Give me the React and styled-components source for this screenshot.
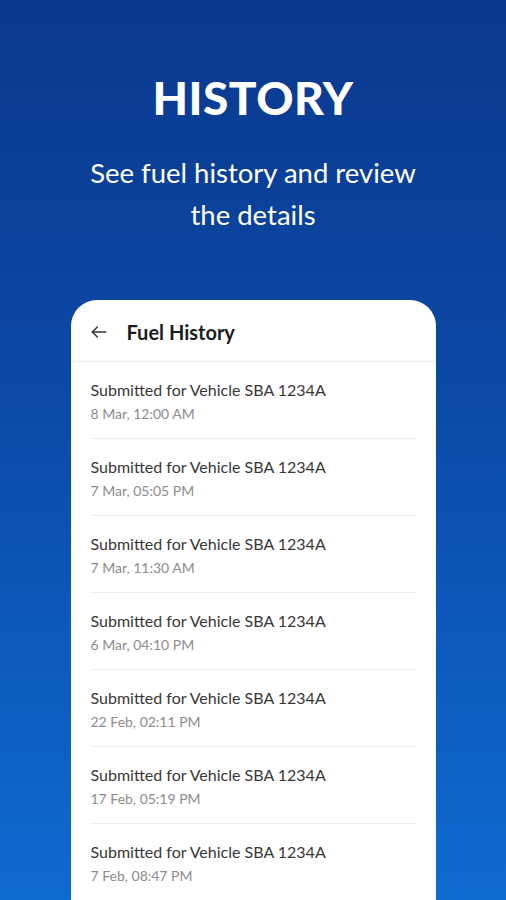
import React from 'react'
import styled, { createGlobalStyle } from 'styled-components'

const GlobalStyle = createGlobalStyle`
  html, body {
    margin: 0;
    padding: 0;
  }
  body {
    font-family: Lato, "Noto Sans", sans-serif;
  }
`

const Page = styled.div`
  width: 506px;
  height: 900px;
  overflow: hidden;
  display: flex;
  flex-direction: column;
  align-items: center;
  background: linear-gradient(180deg, #0a388d 0%, #0b4aa8 45%, #0e6bcf 100%);
  box-sizing: border-box;
  padding-top: 71px;
`

const Title = styled.h1`
  margin: 0;
  color: #fff;
  font-size: 46px;
  font-weight: 900;
  line-height: 54px;
  letter-spacing: 0.5px;
`

const Subtitle = styled.p`
  margin: 27px 0 0;
  color: #fff;
  font-size: 27.5px;
  font-weight: 400;
  line-height: 42px;
  text-align: center;
  width: 350px;
`

const Card = styled.div`
  margin-top: 64px;
  width: 365px;
  flex: 1;
  background: #fff;
  border-radius: 26px 26px 0 0;
  display: flex;
  flex-direction: column;
`

const Header = styled.div`
  display: flex;
  align-items: center;
  gap: 18px;
  height: 62px;
  padding: 3px 0 0 18px;
  border-bottom: 1px solid #eceef1;
  box-sizing: border-box;
`

const HeaderTitle = styled.span`
  font-size: 20px;
  font-weight: 700;
  color: #1c1c1c;
`

const List = styled.div`
  padding: 0 20px;
`

const Row = styled.div`
  height: 77px;
  box-sizing: border-box;
  padding-top: 18px;
  border-bottom: 1px solid #eceef1;
`

const RowTitle = styled.div`
  font-size: 16px;
  color: #383838;
  line-height: 20px;
`

const RowDate = styled.div`
  margin-top: 5px;
  font-size: 14px;
  color: #8c8c8c;
  line-height: 18px;
`

const items = [
  '8 Mar, 12:00 AM',
  '7 Mar, 05:05 PM',
  '7 Mar, 11:30 AM',
  '6 Mar, 04:10 PM',
  '22 Feb, 02:11 PM',
  '17 Feb, 05:19 PM',
  '7 Feb, 08:47 PM',
]

function BackArrow() {
  return (
    <svg width="20" height="20" viewBox="0 0 24 24" fill="none" stroke="#333" strokeWidth="1.8" strokeLinecap="round" strokeLinejoin="round">
      <path d="M20 12H4" />
      <path d="M10 6l-6 6 6 6" />
    </svg>
  )
}

export default function App() {
  return (
    <>
      <GlobalStyle />
      <Page>
        <Title>HISTORY</Title>
        <Subtitle>See fuel history and review the details</Subtitle>
        <Card>
          <Header>
            <BackArrow />
            <HeaderTitle>Fuel History</HeaderTitle>
          </Header>
          <List>
            {items.map((d, i) => (
              <Row key={i}>
                <RowTitle>Submitted for Vehicle SBA 1234A</RowTitle>
                <RowDate>{d}</RowDate>
              </Row>
            ))}
          </List>
        </Card>
      </Page>
    </>
  )
}
